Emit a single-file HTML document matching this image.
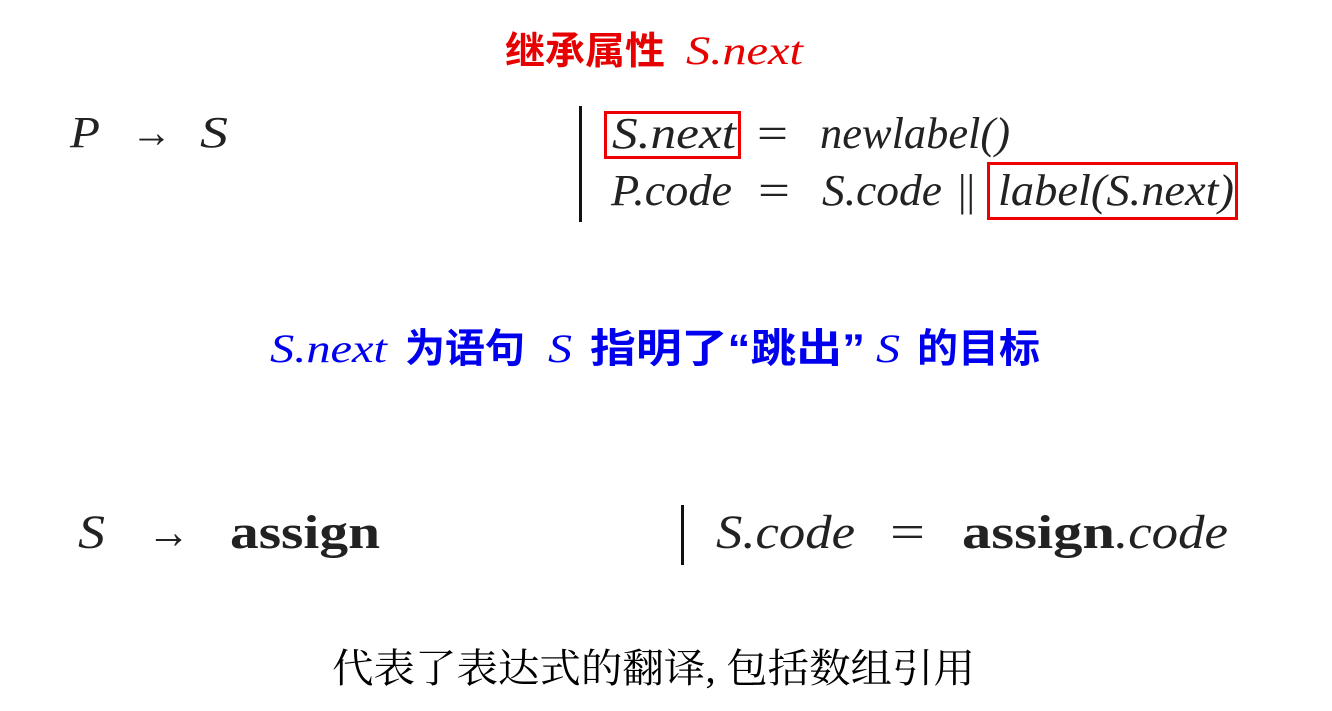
<!DOCTYPE html>
<html><head><meta charset="utf-8"><style>
body{margin:0;width:1332px;height:711px;background:#fff;overflow:hidden;}
svg{display:block;}
text{font-family:"Liberation Serif",serif;}
.it{font-style:italic;}
.cj{font-family:"Liberation Sans","Noto Sans CJK SC",sans-serif;font-weight:bold;}
</style></head><body>
<svg width="1332" height="711" viewBox="0 0 1332 711">
<g fill="#e60000">
<text class="cj" x="505" y="64" font-size="38" textLength="160" lengthAdjust="spacingAndGlyphs">继承属性</text>
<text class="it" x="686" y="64" font-size="40" textLength="117" lengthAdjust="spacingAndGlyphs">S.next</text>
</g>
<g fill="#222" font-size="44">
<text class="it" x="70" y="147" textLength="30" lengthAdjust="spacingAndGlyphs">P</text>
<text x="131" y="147" textLength="41" lengthAdjust="spacingAndGlyphs">→</text>
<text class="it" x="200" y="147" textLength="28" lengthAdjust="spacingAndGlyphs">S</text>
<rect x="579" y="106" width="3" height="116" fill="#111"/>
<text class="it" x="612" y="148" textLength="124" lengthAdjust="spacingAndGlyphs">S.next</text>
<text x="757" y="148" textLength="31" lengthAdjust="spacingAndGlyphs">=</text>
<text class="it" x="820" y="148" textLength="190" lengthAdjust="spacingAndGlyphs">newlabel()</text>
<text class="it" x="611" y="205" textLength="121" lengthAdjust="spacingAndGlyphs">P.code</text>
<text x="758" y="205" textLength="32" lengthAdjust="spacingAndGlyphs">=</text>
<text class="it" x="822" y="205" textLength="120" lengthAdjust="spacingAndGlyphs">S.code</text>
<text x="958" y="205" textLength="17" lengthAdjust="spacingAndGlyphs">||</text>
<text class="it" x="998" y="205" textLength="236" lengthAdjust="spacingAndGlyphs">label(S.next)</text>
</g>
<rect x="605.5" y="112.5" width="134" height="45" fill="none" stroke="#e00" stroke-width="3"/>
<rect x="988.5" y="163.5" width="248" height="55" fill="none" stroke="#e00" stroke-width="3"/>
<g fill="#0000ee">
<text class="it" x="270" y="362" font-size="40" textLength="117" lengthAdjust="spacingAndGlyphs">S.next</text>
<text class="cj" x="405" y="362" font-size="40" textLength="120" lengthAdjust="spacingAndGlyphs">为语句</text>
<text class="it" x="548" y="362" font-size="40" textLength="24" lengthAdjust="spacingAndGlyphs">S</text>
<text class="cj" x="590" y="362" font-size="40" textLength="275" lengthAdjust="spacingAndGlyphs">指明了“跳出”</text>
<text class="it" x="876" y="362" font-size="40" textLength="24" lengthAdjust="spacingAndGlyphs">S</text>
<text class="cj" x="917" y="362" font-size="40" textLength="123" lengthAdjust="spacingAndGlyphs">的目标</text>
</g>
<g fill="#222" font-size="48">
<text class="it" x="78" y="548" textLength="27" lengthAdjust="spacingAndGlyphs">S</text>
<text x="147" y="548" textLength="43" lengthAdjust="spacingAndGlyphs">→</text>
<text x="230" y="548" font-weight="bold" textLength="150" lengthAdjust="spacingAndGlyphs">assign</text>
<rect x="681" y="505" width="3" height="60" fill="#111"/>
<text class="it" x="716" y="548" textLength="139" lengthAdjust="spacingAndGlyphs">S.code</text>
<text x="890" y="548" textLength="35" lengthAdjust="spacingAndGlyphs">=</text>
<text x="962" y="548" font-weight="bold" textLength="153" lengthAdjust="spacingAndGlyphs">assign</text>
<text class="it" x="1115" y="548" textLength="113" lengthAdjust="spacingAndGlyphs">.code</text>
</g>
<text x="332" y="682" font-size="40" fill="#000" style="font-family:'Liberation Serif','Noto Serif CJK SC',serif" textLength="643" lengthAdjust="spacingAndGlyphs">代表了表达式的翻译, 包括数组引用</text>
</svg>
</body></html>
